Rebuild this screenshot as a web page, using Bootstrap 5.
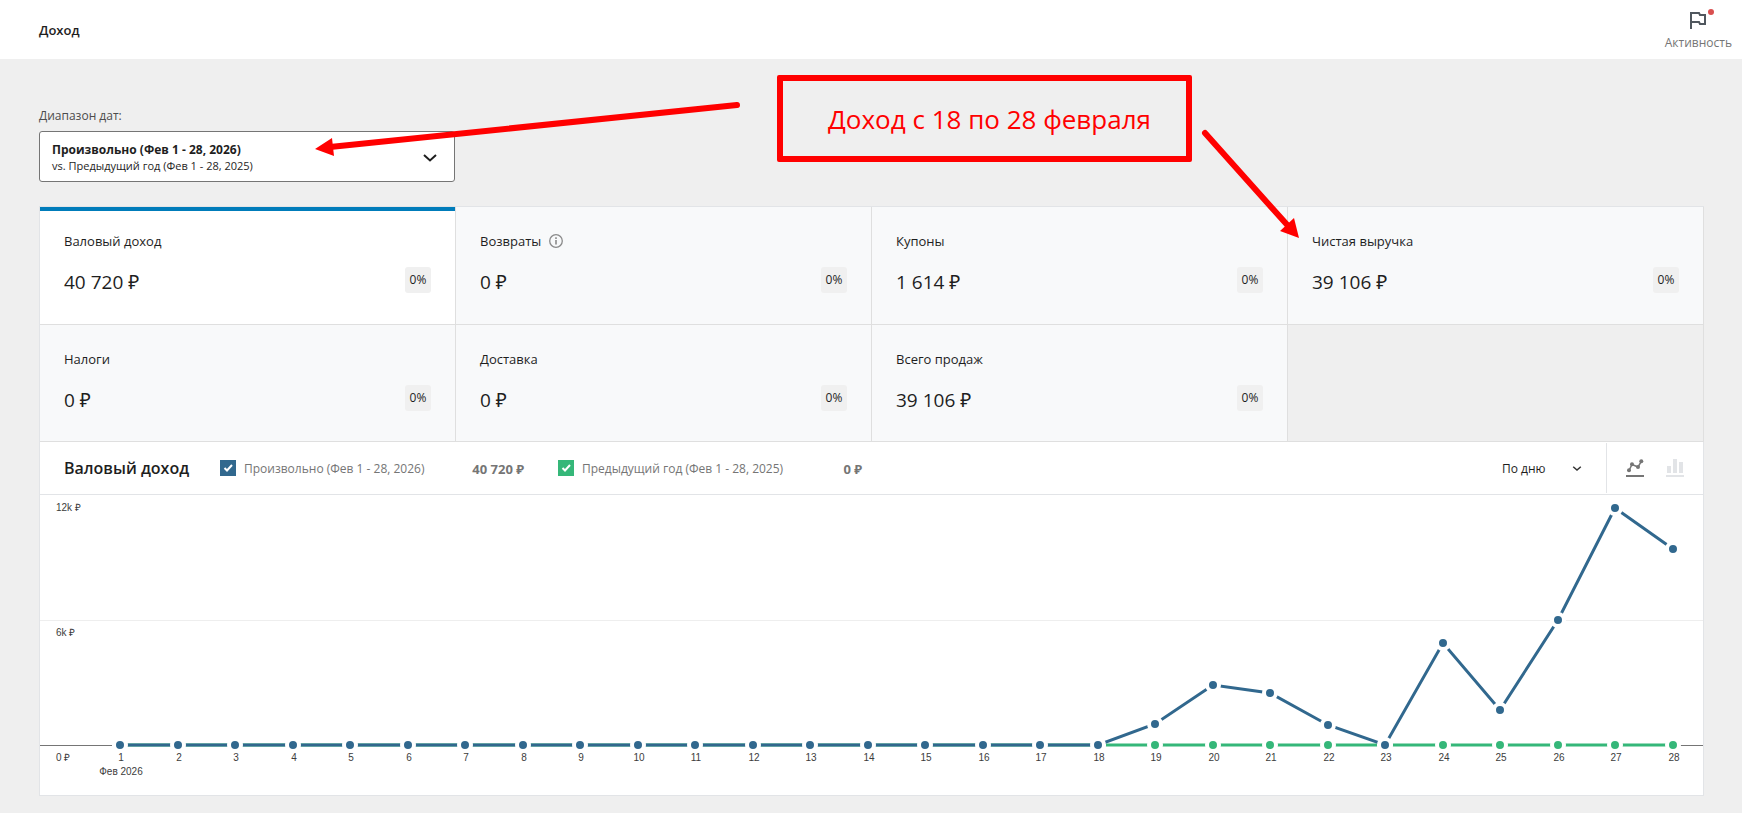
<!DOCTYPE html>
<html lang="ru">
<head>
<meta charset="utf-8">
<meta name="viewport" content="width=device-width, initial-scale=1">
<title>Доход</title>
<link href="https://cdn.jsdelivr.net/npm/bootstrap@5.3.0/dist/css/bootstrap.min.css" rel="stylesheet">
<style>
  :root {
    --page-bg: #efefef;
    --line: #dfdfdf;
    --line-soft: #e2e4e7;
    --ink: #1e1e1e;
    --muted: #757575;
    --current: #31688e;
    --previous: #35b779;
    --callout: #f00;
  }
  body {
    font-family: "Open Sans", "Noto Sans", sans-serif;
    font-size: 13px;
    line-height: 20px;
    color: var(--ink);
    background: var(--page-bg);
  }
  .top-bar { height: 59px; padding-left: 39px; padding-right: 10px; background: #fff; }
  .page-title { font-size: 13px; line-height: 20px; font-weight: 600; }
  .activity-btn { font-size: 12px; line-height: 16px; color: var(--muted); gap: 3px; }
  .activity-btn svg { width: 24px; height: 24px; }
  .activity-dot { width: 6px; height: 6px; background: #d94f4f; top: 1px; right: 18px; }

  .report { padding: 47px 38px 18px 39px; }
  .range-label { font-size: 12px; line-height: 20px; color: #4c4c4c; margin-bottom: 5px; }
  .range-btn {
    height: 51px; padding: 2px 17px 0 12px;
    background: #fff; border: 1px solid #757575; border-radius: 3px;
    font-size: 11px; line-height: 16px; color: var(--ink); text-align: left;
  }
  .range-btn strong { font-size: 12px; }

  .panel { border: 1px solid var(--line-soft); background: #fff; margin-top: 24px; }
  .tiles { background: var(--page-bg); margin-right: -1px; }
  .tiles > div { border-right: 1px solid var(--line); border-bottom: 1px solid var(--line); }
  .tile { height: 117px; padding: 24px; background: #f8f9fa; color: var(--ink); text-decoration: none; }
  .tile:hover { color: var(--ink); background: #f3f4f5; }
  .tiles > div:nth-child(n+5) .tile { height: 116px; }
  .tile.active { background: #fff; box-shadow: inset 0 4px 0 #007cba; }
  .tile-value { font-size: 19px; line-height: 30px; }
  .tile-delta { font-size: 12px; line-height: 26px; height: 26px; width: 26px; border-radius: 3px; background: #f0f0f0; text-align: center; }

  .chart-bar { height: 53px; border-bottom: 1px solid var(--line-soft); padding-left: 24px; }
  .chart-title { font-size: 16px; line-height: 24px; font-weight: 600; width: 156px; }
  .legend-item { width: 304px; margin-right: 34px; font-size: 12px; color: var(--muted); }
  .legend-item .form-check-input {
    width: 16px; height: 16px; margin: 0 8px 0 0; border: 0; border-radius: 0;
    background-size: 16px 16px;
    background-image: url("data:image/svg+xml,%3csvg xmlns='http://www.w3.org/2000/svg' viewBox='0 0 16 16'%3e%3cpath fill='none' stroke='%23fff' stroke-width='2' d='M4.500 8l2.500 2.500 5-5.500'/%3e%3c/svg%3e");
  }
  .check-current:checked { background-color: var(--current); }
  .check-previous:checked { background-color: var(--previous); }
  .legend-item label { padding-top: 2px; }
  .legend-item strong { font-size: 13px; }
  .interval-select {
    width: 82px; height: 32px; border: 0; padding: 2px 24px 0 0; margin-right: 22px;
    font-size: 12px; line-height: 20px; color: var(--ink); background-size: 10px 10px; background-position: right 2px center;
    background-image: url("data:image/svg+xml,%3csvg xmlns='http://www.w3.org/2000/svg' viewBox='0 0 10 10'%3e%3cpath fill='none' stroke='%23333' stroke-width='1.500' d='M1.200 3.800L5 7l3.800-3.200'/%3e%3c/svg%3e");
  }
  .chart-types { height: 50px; border-left: 1px solid var(--line-soft); padding: 0 19px; gap: 22px; }
  .chart-types svg { width: 18px; height: 18px; }
  .type-btn { color: #e2e4e7; }
  .type-btn.active { color: #757575; }

  .chart-area { height: 300px; }
  .chart-area text { font: 10px "Liberation Sans", Arial, sans-serif; fill: #3c3c3c; }

  .callout-box {
    left: 777px; top: 75px; width: 415px; height: 87px; padding-left: 10px;
    border: 6px solid var(--callout); border-radius: 2px;
    color: var(--callout); font-size: 26px; line-height: 32px;
  }
  .callout-arrows { left: 0; top: 0; pointer-events: none; }
</style>
</head>
<body class="position-relative">

<header class="top-bar d-flex justify-content-between align-items-center">
  <h1 class="page-title m-0">Доход</h1>
  <button type="button" class="activity-btn btn border-0 p-0 align-self-start position-relative d-flex flex-column align-items-center mt-2">
    <svg viewBox="0 0 24 24" fill="none" stroke="#50575e" stroke-width="2" aria-hidden="true"><path d="M5 21V5h8l1 2h5v9h-5l-1-2H5"/></svg>
    <span class="activity-dot position-absolute rounded-circle"></span>
    Активность
  </button>
</header>

<main class="report">
  <div class="row g-0">
    <div class="col-3">
      <div class="range-label" id="range-label">Диапазон дат:</div>
      <button type="button" class="range-btn w-100 d-flex justify-content-between align-items-center" aria-labelledby="range-label range-value">
        <span id="range-value"><strong class="d-block">Произвольно (Фев 1 - 28, 2026)</strong>vs. Предыдущий год (Фев 1 - 28, 2025)</span>
        <svg width="14" height="10" viewBox="0 0 14 10" fill="none" stroke="#1e1e1e" stroke-width="2" aria-hidden="true"><path d="M1 2l6 5.500L13 2"/></svg>
      </button>
    </div>
  </div>

  <section class="panel">
    <div class="tiles row row-cols-4 g-0">
      <div class="col"><a href="#" class="tile active d-block">
        <div>Валовый доход</div>
        <div class="d-flex justify-content-between align-items-start mt-3"><span class="tile-value">40 720 ₽</span><span class="tile-delta">0%</span></div>
      </a></div>
      <div class="col"><a href="#" class="tile d-block">
        <div class="d-flex align-items-center">Возвраты
          <svg class="ms-2" width="14" height="14" viewBox="0 0 14 14" aria-hidden="true"><circle cx="7" cy="7" r="6.300" fill="none" stroke="#8a8a8a" stroke-width="1.300"/><path d="M7 6v4.500M7 3.300v1.600" stroke="#8a8a8a" stroke-width="1.600"/></svg>
        </div>
        <div class="d-flex justify-content-between align-items-start mt-3"><span class="tile-value">0 ₽</span><span class="tile-delta">0%</span></div>
      </a></div>
      <div class="col"><a href="#" class="tile d-block">
        <div>Купоны</div>
        <div class="d-flex justify-content-between align-items-start mt-3"><span class="tile-value">1 614 ₽</span><span class="tile-delta">0%</span></div>
      </a></div>
      <div class="col"><a href="#" class="tile d-block">
        <div>Чистая выручка</div>
        <div class="d-flex justify-content-between align-items-start mt-3"><span class="tile-value">39 106 ₽</span><span class="tile-delta">0%</span></div>
      </a></div>
      <div class="col"><a href="#" class="tile d-block">
        <div>Налоги</div>
        <div class="d-flex justify-content-between align-items-start mt-3"><span class="tile-value">0 ₽</span><span class="tile-delta">0%</span></div>
      </a></div>
      <div class="col"><a href="#" class="tile d-block">
        <div>Доставка</div>
        <div class="d-flex justify-content-between align-items-start mt-3"><span class="tile-value">0 ₽</span><span class="tile-delta">0%</span></div>
      </a></div>
      <div class="col"><a href="#" class="tile d-block">
        <div>Всего продаж</div>
        <div class="d-flex justify-content-between align-items-start mt-3"><span class="tile-value">39 106 ₽</span><span class="tile-delta">0%</span></div>
      </a></div>
      <div class="col"></div>
    </div>

    <div class="chart-bar d-flex align-items-center">
      <h2 class="chart-title m-0">Валовый доход</h2>
      <div class="legend-item d-flex align-items-center">
        <input class="form-check-input check-current" type="checkbox" id="series-current" checked>
        <label class="flex-grow-1 d-flex justify-content-between" for="series-current"><span>Произвольно (Фев 1 - 28, 2026)</span><strong>40 720 ₽</strong></label>
      </div>
      <div class="legend-item d-flex align-items-center">
        <input class="form-check-input check-previous" type="checkbox" id="series-previous" checked>
        <label class="flex-grow-1 d-flex justify-content-between" for="series-previous"><span>Предыдущий год (Фев 1 - 28, 2025)</span><strong>0 ₽</strong></label>
      </div>
      <select class="form-select interval-select ms-auto" aria-label="Интервал">
        <option>По дню</option>
      </select>
      <div class="chart-types d-flex align-items-center">
        <button type="button" class="type-btn active btn border-0 p-0 d-flex" aria-label="Линейный график">
          <svg viewBox="0 0 18 18" fill="currentColor"><path d="M3 11.500L6 5.500L12 8L15.500 2.200" fill="none" stroke="currentColor" stroke-width="1.500"/><circle cx="3" cy="11.300" r="2"/><circle cx="6" cy="5.300" r="2"/><circle cx="12" cy="8" r="2"/><circle cx="15.300" cy="2.200" r="2"/><path d="M0 16h18v2H0z"/></svg>
        </button>
        <button type="button" class="type-btn btn border-0 p-0 d-flex" aria-label="Столбчатая диаграмма">
          <svg viewBox="0 0 18 18" fill="currentColor"><path d="M1 7h4v7H1zM7 0h4v14H7zM13 3h4v11h-4zM0 16h18v2H0z"/></svg>
        </button>
      </div>
    </div>

    <div class="chart-area"><svg id="chart" class="d-block w-100 h-100" role="img" aria-label="Валовый доход по дням"></svg></div>
  </section>
</main>

<svg class="callout-arrows position-absolute" width="1320" height="250" fill="#f00" stroke="none" aria-hidden="true">
  <path d="M737 105L330 147M1205 133L1290 228" stroke="#f00" stroke-width="6" stroke-linecap="round"/>
  <path d="M315 149L332 138L334 156zM1299 238L1280 231L1294 218z"/>
</svg>
<div class="callout-box position-absolute d-flex align-items-center justify-content-center">Доход с 18 по 28 февраля</div>

<script src="https://cdn.jsdelivr.net/npm/bootstrap@5.3.0/dist/js/bootstrap.bundle.min.js"></script>
<script>
  const sales = { 19: 1008, 20: 2880, 21: 2496, 22: 960, 24: 4896, 25: 1680, 26: 6000, 27: 11376, 28: 9408 };
  const days = Array.from({ length: 28 }, (_, i) => i + 1);
  const current = days.map(d => sales[d] || 0);
  const previous = days.map(() => 0);
  const base = 250, padLeft = 80, padRight = 30;

  function drawChart() {
    const svg = document.getElementById('chart');
    const width = svg.clientWidth;
    const step = (width - padLeft - padRight) / (days.length - 1);
    const x = i => Math.round(padLeft + step * i);
    const y = v => Math.round(base - v / 12000 * base);
    const series = (values, color) => {
      const points = values.map((v, i) => x(i) + ',' + y(v)).join(' ');
      const dots = values.map((v, i) =>
        `<circle cx="${x(i)}" cy="${y(v)}" r="6" fill="${color}" stroke="#fff" stroke-width="4"/>`).join('');
      return `<polyline points="${points}" fill="none" stroke="${color}" stroke-width="3"/>` + dots;
    };
    let out = `<path d="M0 125.5H${width}" stroke="#eee"/><path d="M0 250.5H${width}" stroke="#757575"/>`;
    out += series(previous, '#35b779') + series(current, '#31688e');
    out += `<text x="16" y="16">12k ₽</text><text x="16" y="141">6k ₽</text><text x="16" y="266">0 ₽</text>`;
    out += days.map((d, i) => `<text x="${x(i) + 1}" y="266" text-anchor="middle">${d}</text>`).join('');
    out += `<text x="${x(0) + 1}" y="280" text-anchor="middle">Фев 2026</text>`;
    svg.innerHTML = out;
  }
  drawChart();
  window.addEventListener('resize', drawChart);
</script>
</body>
</html>
